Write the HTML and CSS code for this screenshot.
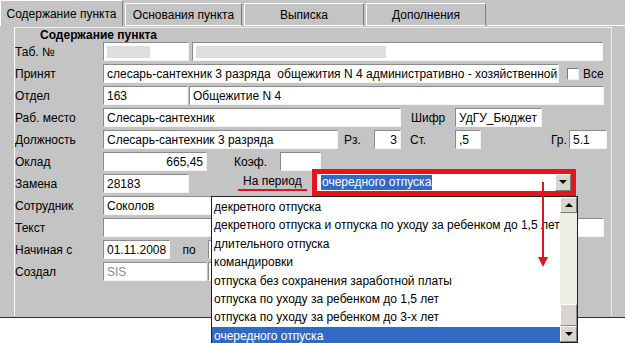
FILE: index.html
```html
<!DOCTYPE html>
<html>

<head lang="ru">
  <meta charset="UTF-8">
  <title>Содержание пункта</title>
  <link rel="stylesheet" href="styles.css">
</head>

<body>
  <div class="page">
    <div class="app">
      <div class="tabs">
        <div class="tab active" style="width:123px">Содержание пункта</div>
        <div class="tab" style="width:117px">Основания пункта</div>
        <div class="tab" style="width:120px">Выписка</div>
        <div class="tab" style="width:120px">Дополнения</div>
        <div class="tabs-fill"></div>
      </div>

      <div class="panel">
        <div class="group">
          <div class="legend">Содержание пункта</div>

          <div class="row">
            <span class="lbl">Таб. №</span>
            <span class="f w86"><i class="blur" style="width:43px"></i></span>
            <span class="f w411 ml3"><i class="blur" style="width:190px"></i></span>
          </div>

          <div class="row">
            <span class="lbl">Принят</span>
            <span class="f w456">слесарь-сантехник 3 разряда&nbsp; общежития N 4 административно - хозяйственной</span>
            <span class="chk"></span>
            <span class="chk-lbl">Все</span>
          </div>

          <div class="row">
            <span class="lbl">Отдел</span>
            <span class="f w85">163</span>
            <span class="f w415 ml1">Общежитие N 4</span>
          </div>

          <div class="row">
            <span class="lbl">Раб. место</span>
            <span class="f w298">Слесарь-сантехник</span>
            <span class="lbl2 sh">Шифр</span>
            <span class="f w87">УдГУ_Бюджет</span>
          </div>

          <div class="row">
            <span class="lbl">Должность</span>
            <span class="f w235">Слесарь-сантехник 3 разряда</span>
            <span class="lbl2 rz">Рз.</span>
            <span class="f w27 right">3</span>
            <span class="lbl2 st">Ст.</span>
            <span class="f w26">,5</span>
            <span class="lbl2 gr">Гр.</span>
            <span class="f w38">5.1</span>
          </div>

          <div class="row">
            <span class="lbl">Оклад</span>
            <span class="f w104 right">665,45</span>
            <span class="lbl2 kf">Коэф.</span>
            <span class="f w41"></span>
          </div>

          <div class="row">
            <span class="lbl">Замена</span>
            <span class="f w86">28183</span>
            <span class="period"><span class="mark">На период</span></span>
            <span class="combo">
              <span class="combo-val"><span class="sel">очередного отпуска</span></span>
              <span class="btn"><i class="tri"></i></span>
            </span>
          </div>

          <div class="row">
            <span class="lbl">Сотрудник</span>
            <span class="f w200">Соколов</span>
          </div>

          <div class="row">
            <span class="lbl">Текст</span>
            <span class="f w501"></span>
          </div>

          <div class="row">
            <span class="lbl">Начиная с</span>
            <span class="f w67">01.11.2008</span>
            <span class="po">по</span>
            <span class="f w100"></span>
          </div>

          <div class="row">
            <span class="lbl">Создал</span>
            <span class="f w104 dim">SIS</span>
            <span class="f w100 ml1"></span>
          </div>
        </div>
      </div>
    </div>

    <div class="list">
      <ul class="items">
        <li>декретного отпуска</li>
        <li>декретного отпуска и отпуска по уходу за ребенком до 1,5 лет</li>
        <li>длительного отпуска</li>
        <li>командировки</li>
        <li>отпуска без сохранения заработной платы</li>
        <li>отпуска по уходу за ребенком до 1,5 лет</li>
        <li>отпуска по уходу за ребенком до 3-х лет</li>
        <li class="on">очередного отпуска</li>
      </ul>
      <div class="scroll">
        <span class="sbtn"><i class="tri up"></i></span>
        <span class="track"></span>
        <span class="thumb"></span>
        <span class="sbtn"><i class="tri"></i></span>
      </div>
    </div>

    <svg class="arrow" width="12" height="86" viewBox="0 0 12 86">
      <line x1="6" y1="0" x2="6" y2="76" stroke="#e0141c" stroke-width="2" />
      <polygon points="1,75 11,75 6,85" fill="#e0141c" />
    </svg>
  </div>
</body>

</html>
```

FILE: styles.css
```css
* {
  margin: 0;
  padding: 0;
  box-sizing: border-box;
}

html,
body {
  height: 343px;
}

body {
  background: #fff;
  font-family: "Liberation Sans", Arial, sans-serif;
  font-size: 12px;
  color: #000;
}

.page {
  width: 625px;
  height: 343px;
  position: relative;
}

.app {
  width: 625px;
  height: 318px;
  background: #c4c4c4;
  border-bottom: 1px solid #303030;
}

/* вкладки */
.tabs {
  display: flex;
  height: 26px;
}

.tab {
  height: 23px;
  margin-top: 3px;
  margin-right: 2px;
  border: 1px solid #fff;
  border-right-color: #7c7c7c;
  text-align: center;
  line-height: 22px;
}

.tab.active {
  height: 26px;
  margin-top: 0;
  line-height: 27px;
  border-bottom: 0;
}

.tabs-fill {
  flex: 1;
  border-bottom: 1px solid #fff;
}

.tab:not(.active) {
  border-bottom: 1px solid #fff;
}

.panel {
  height: 291px;
  padding-left: 14px;
  padding-top: 1px;
}

.group {
  width: 598px;
  height: 289px;
  border-left: 1px solid #fff;
  border-top: 1px solid #f0f0f0;
  border-right: 1px solid #e8e8e8;
}

.legend {
  height: 14px;
  line-height: 15px;
  padding-left: 25px;
  font-weight: bold;
}

.row {
  display: flex;
  align-items: center;
  height: 19px;
  margin-bottom: 3px;
  white-space: nowrap;
}

.lbl {
  width: 88px;
}

.f {
  display: block;
  height: 19px;
  line-height: 18px;
  padding: 0 3px;
  background: #fff;
  border: 1px solid;
  border-color: #8a8a8a #f4f4f4 #f4f4f4 #8a8a8a;
  overflow: hidden;
}

.right {
  text-align: right;
}

.dim {
  color: #8c8c8c;
}

.blur {
  display: inline-block;
  height: 12px;
  margin-top: 3px;
  background: #dedede;
  vertical-align: top;
}

.ml1 { margin-left: 1px; }
.ml3 { margin-left: 3px; }

.w26 { width: 26px; }
.w27 { width: 27px; }
.w38 { width: 38px; }
.w41 { width: 41px; }
.w67 { width: 67px; }
.w85 { width: 85px; }
.w86 { width: 86px; }
.w87 { width: 87px; }
.w100 { width: 100px; }
.w104 { width: 104px; }
.w200 { width: 200px; }
.w235 { width: 235px; }
.w298 { width: 298px; }
.w411 { width: 411px; }
.w415 { width: 415px; }
.w456 { width: 456px; }
.w501 { width: 501px; }

.lbl2 {
  display: block;
}

.sh { width: 44px; margin-left: 10px; }
.rz { width: 30px; margin-left: 6px; }
.st { width: 45px; margin-left: 9px; }
.gr { width: 18px; margin-left: 70px; }
.kf { width: 46px; margin-left: 27px; }

.chk {
  width: 12px;
  height: 12px;
  margin-left: 8px;
  background: #fff;
  border: 1px solid;
  border-color: #7c7c7c #eee #eee #7c7c7c;
}

.chk-lbl {
  margin-left: 4px;
}

.po {
  width: 38px;
  text-align: center;
}

/* На период + комбобокс */
.period {
  width: 128px;
  padding-left: 49px;
  margin-bottom: 3px;
}

.mark {
  display: inline-block;
  padding: 0 5px 1px;
  line-height: 13px;
  border-bottom: 2px solid #e0141c;
}

.combo {
  display: flex;
  width: 254px;
  height: 17px;
  margin-bottom: 3px;
  background: #fff;
  outline: 5px solid #e8141c;
}

.combo-val {
  flex: 1;
  padding: 1px 4px 0;
  line-height: 15px;
}

.sel {
  display: inline-block;
  background: #316ac5;
  color: #fff;
  padding: 0 1px;
}

.btn,
.sbtn {
  display: flex;
  align-items: center;
  justify-content: center;
  width: 16px;
  background: #d8d6cc;
  border: 1px solid;
  border-color: #fff #7c7c7c #7c7c7c #fff;
}

.tri {
  width: 0;
  height: 0;
  border-left: 4px solid transparent;
  border-right: 4px solid transparent;
  border-top: 4px solid #000;
}

.tri.up {
  border-top: 0;
  border-bottom: 4px solid #000;
}

/* выпадающий список */
.list {
  position: absolute;
  left: 211px;
  top: 196px;
  width: 367px;
  height: 147px;
  display: flex;
  background: #fff;
  border: 1px solid #202020;
}

.items {
  flex: 1;
  list-style: none;
  padding-top: 1px;
}

.items li {
  height: 18.4px;
  line-height: 18px;
  padding-left: 2px;
  white-space: nowrap;
  overflow: hidden;
}

.items li.on {
  background: #316ac5;
  color: #fff;
}

.scroll {
  width: 17px;
  display: flex;
  flex-direction: column;
  background: #efeee6;
}

.sbtn {
  width: 17px;
  height: 16px;
}

.track {
  flex: 1;
}

.thumb {
  height: 22px;
  background: #d8d6cc;
  border: 1px solid;
  border-color: #fff #8a8a8a #8a8a8a #fff;
}

.arrow {
  position: absolute;
  left: 537px;
  top: 182px;
}
```
